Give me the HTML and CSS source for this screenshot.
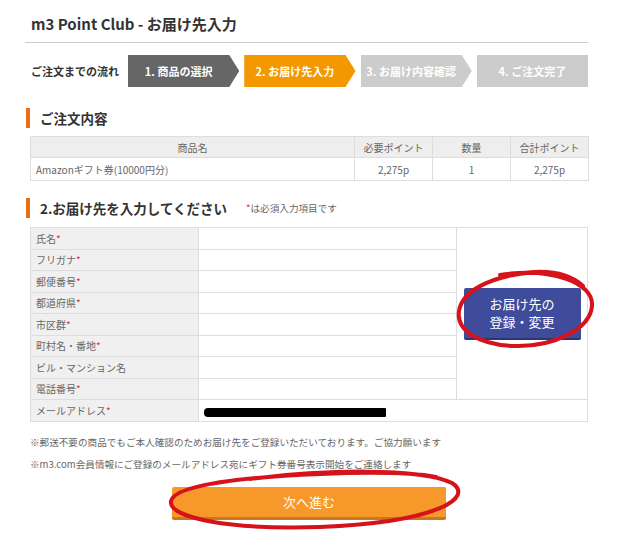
FILE: index.html
```html
<!DOCTYPE html>
<html lang="ja">
<head>
    <meta charset="UTF-8">
    <meta name="viewport" content="width=device-width, initial-scale=1.0">
    <title>m3 Point Club - お届け先入力</title>
    <link rel="stylesheet" href="styles.css">
</head>
<body>
    <div class="page">
        <h1 class="page-title">m3 Point Club - お届け先入力</h1>

        <div class="flow">
            <span class="flow-label">ご注文までの流れ</span>
            <ol class="steps">
                <li class="step done">1. 商品の選択</li>
                <li class="step current">2. お届け先入力</li>
                <li class="step">3. お届け内容確認</li>
                <li class="step last">4. ご注文完了</li>
            </ol>
        </div>

        <h2 class="sec-title first">ご注文内容</h2>
        <table class="order">
            <colgroup>
                <col class="col-name">
                <col class="col-num">
                <col class="col-num">
                <col class="col-num">
            </colgroup>
            <tr>
                <th>商品名</th>
                <th>必要ポイント</th>
                <th>数量</th>
                <th>合計ポイント</th>
            </tr>
            <tr>
                <td class="item">Amazonギフト券(10000円分)</td>
                <td>2,275p</td>
                <td>1</td>
                <td>2,275p</td>
            </tr>
        </table>

        <div class="sec-head">
            <h2 class="sec-title">2.お届け先を入力してください</h2>
            <span class="req-note"><em>*</em>は必須入力項目です</span>
        </div>

        <table class="addr">
            <tr>
                <th>氏名<em>*</em></th>
                <td></td>
                <td class="side" rowspan="8">
                    <button class="btn-addr">お届け先の<br>登録・変更</button>
                </td>
            </tr>
            <tr><th>フリガナ<em>*</em></th><td></td></tr>
            <tr><th>郵便番号<em>*</em></th><td></td></tr>
            <tr><th>都道府県<em>*</em></th><td></td></tr>
            <tr><th>市区群<em>*</em></th><td></td></tr>
            <tr><th>町村名・番地<em>*</em></th><td></td></tr>
            <tr><th>ビル・マンション名</th><td></td></tr>
            <tr><th>電話番号<em>*</em></th><td></td></tr>
            <tr>
                <th>メールアドレス<em>*</em></th>
                <td colspan="2"><span class="masked"></span></td>
            </tr>
        </table>

        <div class="notes">
            <p>※郵送不要の商品でもご本人確認のためお届け先をご登録いただいております。ご協力願います</p>
            <p>※m3.com会員情報にご登録のメールアドレス宛にギフト券番号表示開始をご連絡します</p>
        </div>

        <div class="actions">
            <button class="btn-next">次へ進む</button>
        </div>

        <!-- red hand-drawn marks over the two buttons -->
        <svg class="marks" viewBox="0 0 620 533">
            <path d="M500 275 C550 267 594 282 592 306 C590 330 552 347 515 346 C478 345 456 330 459 311 C462 292 488 276 535 272 C556 271 572 276 583 286"/>
            <path d="M250 479 C320 470 420 467 452 483 C474 497 440 522 320 527 C230 530 168 518 171 501 C174 488 220 478 320 474 C370 472 410 472 436 477"/>
        </svg>
    </div>
</body>
</html>
```

FILE: styles.css
```css
* {
    box-sizing: border-box;
    margin: 0;
    padding: 0;
}

body {
    font-family: "Noto Sans CJK JP", "Noto Sans", sans-serif;
    color: #666;
    background-color: #fff;
    overflow: hidden;
}

.page {
    position: relative;
    width: 620px;
    height: 533px;
    padding: 0 32px 0 25px;
}

.page-title {
    font-size: 15px;
    font-weight: bold;
    color: #333;
    line-height: 22px;
    padding: 13px 0 7px 6px;
    border-bottom: 1px solid #ccc;
}

/* order flow */
.flow {
    display: flex;
    align-items: center;
    height: 32px;
    margin-top: 12px;
}

.flow-label {
    width: 103px;
    padding-left: 6px;
    font-size: 11px;
    font-weight: bold;
    color: #333;
}

.steps {
    flex: 1;
    display: grid;
    grid-template-columns: repeat(4, 1fr);
    gap: 5px;
    height: 32px;
    list-style: none;
}

.step {
    background-color: #ccc;
    color: #fff;
    font-size: 11px;
    font-weight: bold;
    line-height: 32px;
    text-align: center;
    white-space: nowrap;
    padding-right: 10px;
    clip-path: polygon(0 0, calc(100% - 10px) 0, 100% 50%, calc(100% - 10px) 100%, 0 100%);
}

.step.done {
    background-color: #666;
}

.step.current {
    background-color: #f39800;
}

.step.last {
    padding-right: 0;
    clip-path: none;
}

/* section headings */
.sec-title {
    font-size: 13.5px;
    font-weight: bold;
    color: #333;
    line-height: 20px;
    margin-left: 1px;
    padding-left: 10px;
    border-left: 4px solid #eb6d14;
}

.sec-title.first {
    margin-top: 21px;
}

.sec-head {
    display: flex;
    align-items: center;
    margin-top: 17px;
}

.req-note {
    font-size: 9.6px;
    margin-left: 19px;
}

em {
    font-style: normal;
    color: #d33;
}

/* tables */
.order,
.addr {
    width: 558px;
    margin-left: 5px;
    border-collapse: collapse;
    font-size: 10px;
    color: #666;
}

.order {
    margin-top: 8px;
    table-layout: fixed;
}

.order .col-name {
    width: 324px;
}

.order .col-num {
    width: 78px;
}

.order th,
.order td {
    border: 1px solid #ddd;
    font-weight: normal;
    text-align: center;
}

.order th {
    height: 21px;
    background-color: #eee;
}

.order td {
    height: 23px;
}

.order .item {
    text-align: left;
    padding-left: 5px;
}

.addr {
    margin-top: 9px;
}

.addr th,
.addr td {
    height: 21.5px;
    border: 1px solid #ddd;
    padding: 0 5px;
}

.addr th {
    width: 168px;
    background-color: #f0f0f0;
    font-weight: normal;
    text-align: left;
}

.addr .side {
    width: 131px;
    text-align: center;
}

.btn-addr {
    width: 117px;
    height: 52px;
    background-color: #3f4c9c;
    border: none;
    border-bottom: 2px solid #2c366f;
    border-radius: 2px;
    color: #fff;
    font-family: inherit;
    font-size: 13px;
    line-height: 18px;
}

.masked {
    display: inline-block;
    width: 182px;
    height: 9px;
    background-color: #000;
    border-radius: 4px 1px 1px 4px;
    vertical-align: middle;
}

/* notes and submit */
.notes {
    margin: 9px 0 0 5px;
    font-size: 9.6px;
    line-height: 22px;
}

.actions {
    display: flex;
    justify-content: center;
    margin: 12px 0 0 5px;
}

.btn-next {
    width: 274px;
    height: 33px;
    background-color: #f7982b;
    border: none;
    border-bottom: 3px solid #c8781e;
    border-radius: 2px;
    color: #fff;
    font-family: inherit;
    font-size: 13px;
}

.marks {
    position: absolute;
    left: 0;
    top: 0;
    width: 620px;
    height: 533px;
    pointer-events: none;
}

.marks path {
    fill: none;
    stroke: #d6121b;
    stroke-width: 4;
    stroke-linecap: round;
}
```
